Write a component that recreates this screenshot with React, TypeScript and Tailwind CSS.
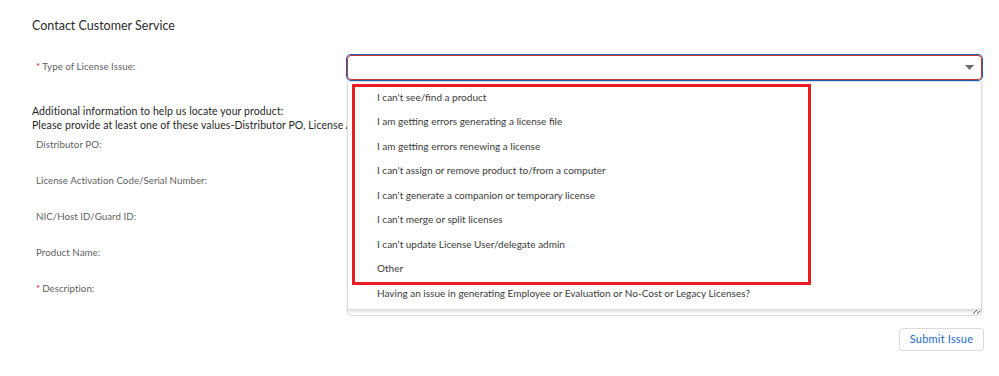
import { useState } from "react";

const options = [
  "I can't see/find a product",
  "I am getting errors generating a license file",
  "I am getting errors renewing a license",
  "I can't assign or remove product to/from a computer",
  "I can't generate a companion or temporary license",
  "I can't merge or split licenses",
  "I can't update License User/delegate admin",
  "Other",
  "Having an issue in generating Employee or Evaluation or No-Cost or Legacy Licenses?",
];

const fields = [
  "Distributor PO:",
  "License Activation Code/Serial Number:",
  "NIC/Host ID/Guard ID:",
  "Product Name:",
];

function Label({ text, required }: { text: string; required?: boolean }) {
  return (
    <div className="w-[315px] shrink-0 pl-[4px] text-[9.7px] tracking-[0.05px] text-[#5f5f5f]">
      {required && <span className="mr-[2px] text-[#d8232a]">*</span>}
      {text}
    </div>
  );
}

export default function App() {
  const [open] = useState(true);

  return (
    <div
      className="h-[376px] w-full bg-white pl-[32px] pr-[17px] pt-[17px]"
      style={{ fontFamily: "Lato, 'Liberation Sans', sans-serif" }}
    >
      <h2 className="text-[12.5px] leading-[18px] text-[#2b2b2b]">Contact Customer Service</h2>

      <div className="mt-[20px] flex items-center">
        <div className="-mt-[3px]">
          <Label text="Type of License Issue:" required />
        </div>
        <div className="relative flex-1">
          <div className="flex h-[25px] items-center justify-end rounded-[4px] border border-[#c23934] pr-[7px] shadow-[0_0_0_1px_#1f5fb0]">
            <svg width="9" height="5" viewBox="0 0 9 5">
              <path d="M0 0h9L4.5 5z" fill="#6f6f6f" />
            </svg>
          </div>
          {open && (
            <div className="absolute left-0 right-0 top-[26px] z-10 rounded-b-[3px] border border-[#dcdcdc] bg-white py-[3px] shadow-[0_2px_3px_rgba(0,0,0,0.12)]">
              {options.map((o) => (
                <div
                  key={o}
                  className="flex h-[24.5px] items-center pl-[29px] text-[10px] text-[#3a3a3a]"
                >
                  {o}
                </div>
              ))}
              <div className="pointer-events-none absolute left-[4px] top-[2px] h-[201px] w-[459px] border-[3px] border-[#ec1c24]" />
            </div>
          )}
        </div>
      </div>

      <div className="mt-[24px] text-[10.5px] leading-[14px] tracking-[0.1px] text-[#1f1f1f]">
        <p>Additional information to help us locate your product:</p>
        <p className="whitespace-nowrap">
          Please provide at least one of these values-Distributor PO, License Activation Code/Serial Number, NIC/Host ID/Guard ID or Product Name
        </p>
      </div>

      <div className="mt-[2px] flex flex-col">
        {fields.map((f) => (
          <div key={f} className="flex h-[36px] items-start">
            <div className="pt-[3px]">
              <Label text={f} />
            </div>
            <div className="h-[25px] flex-1 rounded-[4px] border border-[#dddbda]" />
          </div>
        ))}
        <div className="flex items-start">
          <div className="pt-[3px]">
            <Label text="Description:" required />
          </div>
          <textarea className="h-[38px] flex-1 rounded-[4px] border border-[#dddbda] outline-none" />
        </div>
      </div>

      <div className="mt-[12px] flex justify-end">
        <button className="-mr-[2px] h-[23px] w-[85px] rounded-[4px] border border-[#dddbda] bg-white text-[11px] tracking-[0.2px] text-[#1b6ac9]">
          Submit Issue
        </button>
      </div>
    </div>
  );
}
